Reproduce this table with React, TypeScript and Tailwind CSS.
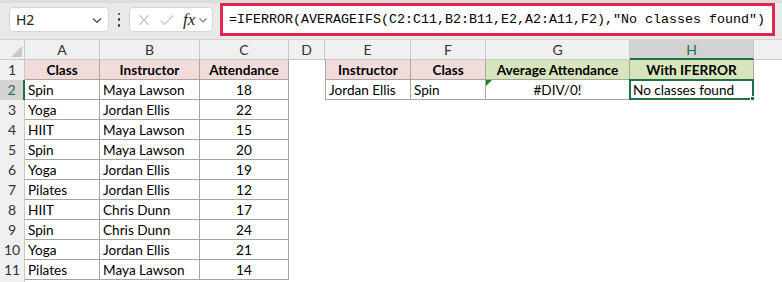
import React from "react";

const cols = [
  { key: "A", w: 75 },
  { key: "B", w: 100 },
  { key: "C", w: 89 },
  { key: "D", w: 36 },
  { key: "E", w: 86 },
  { key: "F", w: 75 },
  { key: "G", w: 144 },
  { key: "H", w: 124 },
  { key: "I", w: 60 },
];

const data: [string, string, number][] = [
  ["Spin", "Maya Lawson", 18],
  ["Yoga", "Jordan Ellis", 22],
  ["HIIT", "Maya Lawson", 15],
  ["Spin", "Maya Lawson", 20],
  ["Yoga", "Jordan Ellis", 19],
  ["Pilates", "Jordan Ellis", 12],
  ["HIIT", "Chris Dunn", 17],
  ["Spin", "Chris Dunn", 24],
  ["Yoga", "Jordan Ellis", 21],
  ["Pilates", "Maya Lawson", 14],
];

type CellSpec = {
  text?: string | number;
  align?: "left" | "center";
  bold?: boolean;
  bg?: string;
  border?: boolean;
  borderLeft?: boolean;
  special?: "sel" | "tri";
};

function cellsFor(r: number): Record<string, CellSpec> {
  const out: Record<string, CellSpec> = {};
  if (r === 1) {
    out.A = { text: "Class", align: "center", bold: true, bg: "#f2dcdb", border: true };
    out.B = { text: "Instructor", align: "center", bold: true, bg: "#f2dcdb", border: true };
    out.C = { text: "Attendance", align: "center", bold: true, bg: "#f2dcdb", border: true };
    out.E = { text: "Instructor", align: "center", bold: true, bg: "#f2dcdb", border: true, borderLeft: true };
    out.F = { text: "Class", align: "center", bold: true, bg: "#f2dcdb", border: true };
    out.G = { text: "Average Attendance", align: "center", bold: true, bg: "#d8e4bc", border: true };
    out.H = { text: "With IFERROR", align: "center", bold: true, bg: "#d8e4bc", border: true };
  } else if (r >= 2 && r <= 11) {
    const d = data[r - 2];
    out.A = { text: d[0], border: true };
    out.B = { text: d[1], border: true };
    out.C = { text: d[2], align: "center", border: true };
    if (r === 2) {
      out.E = { text: "Jordan Ellis", border: true, borderLeft: true };
      out.F = { text: "Spin", border: true };
      out.G = { text: "#DIV/0!", align: "center", border: true, special: "tri" };
      out.H = { text: "No classes found", border: true, special: "sel" };
    }
  }
  return out;
}

function Cell({ w, spec }: { w: number; spec?: CellSpec }) {
  const s = spec || {};
  return (
    <div
      className={
        "relative h-[20px] shrink-0 overflow-visible whitespace-nowrap px-[3px] text-[13.6px] leading-[21px] text-black " +
        (s.border ? "border-b border-r border-[#a6a6a6] " : "") +
        (s.borderLeft ? "border-l " : "") +
        (s.bold ? "font-bold " : "") +
        (s.align === "center" ? "text-center " : "text-left ")
      }
      style={{ width: w, background: s.bg || "#ffffff" }}
    >
      {s.text}
      {s.special === "tri" && (
        <svg className="absolute left-0 top-0" width="6" height="6" viewBox="0 0 6 6">
          <polygon points="0,0 6,0 0,6" fill="#1e7d32" />
        </svg>
      )}
      {s.special === "sel" && (
        <>
          <div className="pointer-events-none absolute -left-[1px] -top-[1px] bottom-[-1px] right-[-1px] border-2 border-[#1e7145]" />
          <div className="absolute bottom-[-3px] right-[-3px] h-[6px] w-[6px] border border-white bg-[#1e7145]" />
        </>
      )}
    </div>
  );
}

export default function App() {
  const rows = Array.from({ length: 12 }, (_, i) => i + 1);
  return (
    <div
      className="h-[282px] w-[782px] overflow-hidden bg-white"
      style={{ fontFamily: "Lato, 'Liberation Sans', sans-serif" }}
    >
      {/* Formula bar */}
      <div className="relative flex h-[40px] items-center border-b border-[#d4d4d4] bg-[#e9e9e9]">
        <div className="absolute left-0 right-0 top-0 h-[3px] bg-[#dcdcdc]" />
        <div className="ml-[9px] flex h-[25px] w-[100px] items-center justify-between rounded-[4px] border border-[#d6d6d6] bg-white pl-[6px] pr-[5px]">
          <span className="text-[14px] text-[#222]" style={{ fontFamily: "'Noto Sans', sans-serif" }}>H2</span>
          <svg width="12" height="12" viewBox="0 0 12 12">
            <path d="M2 4.5 L6 8.5 L10 4.5" fill="none" stroke="#444" strokeWidth="1.2" />
          </svg>
        </div>
        <div className="ml-[8px] flex h-[14px] w-[4px] flex-col items-center justify-between">
          <div className="h-[2.5px] w-[2.5px] rounded-full bg-[#333]" />
          <div className="h-[2.5px] w-[2.5px] rounded-full bg-[#333]" />
          <div className="h-[2.5px] w-[2.5px] rounded-full bg-[#333]" />
        </div>
        <div className="ml-[8px] flex h-[25px] w-[84px] items-center rounded-[4px] border border-[#d6d6d6] bg-white pl-[6px]">
          <svg width="14" height="14" viewBox="0 0 14 14" className="ml-[1px]">
            <path d="M2 2 L12 12 M12 2 L2 12" stroke="#c4c4c4" strokeWidth="1.1" fill="none" />
          </svg>
          <svg width="16" height="14" viewBox="0 0 16 14" className="ml-[8px]">
            <path d="M1.5 7.5 L5.5 11.5 L14 2.5" stroke="#c4c4c4" strokeWidth="1.1" fill="none" />
          </svg>
          <span
            className="ml-[8px] text-[17px] italic leading-none text-[#222]"
            style={{ fontFamily: "'Liberation Serif', serif" }}
          >
            fx
          </span>
          <svg width="10" height="10" viewBox="0 0 10 10" className="ml-[3px]">
            <path d="M1.5 3.5 L5 7 L8.5 3.5" fill="none" stroke="#777" strokeWidth="1.1" />
          </svg>
        </div>
        <div className="ml-[7px] flex h-[33px] w-[555px] items-center border-[3px] border-[#e2264d] bg-white pl-[6px]">
          <span
            className="whitespace-nowrap text-[13.33px] text-black"
            style={{ fontFamily: "'Liberation Mono', monospace" }}
          >
            =IFERROR(AVERAGEIFS(C2:C11,B2:B11,E2,A2:A11,F2),"No classes found")
          </span>
        </div>
      </div>

      {/* Column headers */}
      <div className="flex h-[20px] bg-[#f0f0f0] text-[14px] text-[#333]">
        <div className="relative h-[20px] w-[25px] shrink-0 border-b border-r border-[#c8c8c8]">
          <svg className="absolute bottom-[2px] right-[2px]" width="11" height="11" viewBox="0 0 11 11">
            <polygon points="11,0 11,11 0,11" fill="#c9c9c9" />
          </svg>
        </div>
        {cols.map((c) => {
          const sel = c.key === "H";
          return (
            <div
              key={c.key}
              className={
                "h-[20px] shrink-0 text-center leading-[19px] " +
                (sel
                  ? "border-b-2 border-r border-b-[#1e7145] border-r-[#c8c8c8] bg-[#d3d3d3] text-[#1e7145]"
                  : "border-b border-r border-[#c8c8c8]")
              }
              style={{ width: c.w }}
            >
              {c.key === "I" ? "" : c.key}
            </div>
          );
        })}
      </div>

      {/* Rows */}
      {rows.map((r) => {
        const specs = cellsFor(r);
        const sel = r === 2;
        return (
          <div key={r} className="flex h-[20px]">
            <div
              className={
                "h-[20px] w-[25px] shrink-0 text-center text-[14px] leading-[20px] " +
                (sel
                  ? "border-r-2 border-[#1e7145] bg-[#d3d3d3] text-[#1e7145]"
                  : "border-r border-[#c8c8c8] bg-[#f0f0f0] text-[#333]")
              }
            >
              {r <= 11 ? r : ""}
            </div>
            {cols.map((c) => (
              <Cell key={c.key} w={c.w} spec={specs[c.key]} />
            ))}
          </div>
        );
      })}
    </div>
  );
}
